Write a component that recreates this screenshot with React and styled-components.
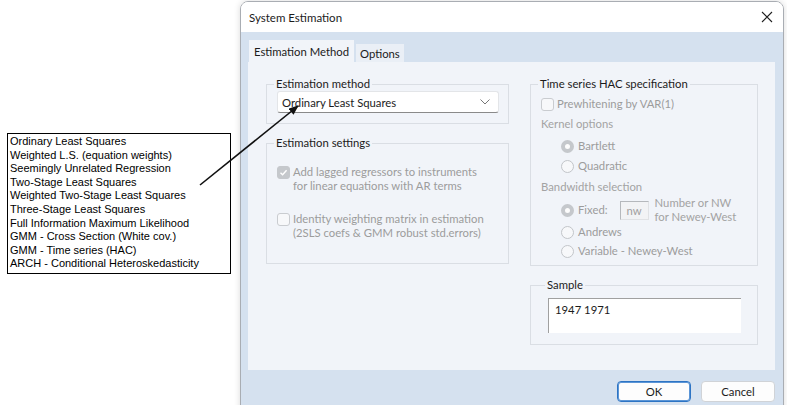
import React from 'react';
import styled, { createGlobalStyle } from 'styled-components';

const GlobalStyle = createGlobalStyle`
    html, body {
        margin: 0;
        padding: 0;
        background: #ffffff;
    }
    body {
        width: 787px;
        height: 405px;
        overflow: hidden;
        font-family: Lato, "Noto Sans", sans-serif;
    }
`;

const methods = [
    'Ordinary Least Squares',
    'Weighted L.S. (equation weights)',
    'Seemingly Unrelated Regression',
    'Two-Stage Least Squares',
    'Weighted Two-Stage Least Squares',
    'Three-Stage Least Squares',
    'Full Information Maximum Likelihood',
    'GMM - Cross Section (White cov.)',
    'GMM - Time series (HAC)',
    'ARCH - Conditional Heteroskedasticity',
];

const Check = ({ checked }) => (
    <CheckBox $checked={checked}>
        {checked && (
            <svg width="9" height="9" viewBox="0 0 9 9">
                <path d="M1.5 4.8 L3.6 6.8 L7.6 2.2" fill="none" stroke="#fff" strokeWidth="1.4" />
            </svg>
        )}
    </CheckBox>
);

const Radio = ({ selected, children }) => (
    <RadioRow>
        <RadioDot $selected={selected} />
        <span>{children}</span>
    </RadioRow>
);

const App = () => {
    return (
        <Page>
            <GlobalStyle />
            <MethodList>
                {methods.map((m) => (
                    <ListItem key={m}>{m}</ListItem>
                ))}
            </MethodList>

            <Dialog>
                <TitleBar>
                    <Title>System Estimation</Title>
                    <CloseIcon width="12" height="12" viewBox="0 0 12 12">
                        <path d="M1 1 L11 11 M11 1 L1 11" stroke="#222" strokeWidth="1.1" />
                    </CloseIcon>
                </TitleBar>

                <DialogBody>
                    <Tabs>
                        <Tab $active>Estimation Method</Tab>
                        <Tab>Options</Tab>
                    </Tabs>

                    <TabPanel>
                        <Column>
                            <Group>
                                <Legend>Estimation method</Legend>
                                <Select>
                                    <span>Ordinary Least Squares</span>
                                    <svg width="10" height="6" viewBox="0 0 10 6">
                                        <path d="M0.5 0.5 L5 5 L9.5 0.5" fill="none" stroke="#777" strokeWidth="1" />
                                    </svg>
                                </Select>
                            </Group>

                            <Group $tall>
                                <Legend>Estimation settings</Legend>
                                <CheckRow>
                                    <Check checked />
                                    <CheckText>
                                        Add lagged regressors to instruments
                                        <br />
                                        for linear equations with AR terms
                                    </CheckText>
                                </CheckRow>
                                <CheckRow $gap>
                                    <Check />
                                    <CheckText>
                                        Identity weighting matrix in estimation
                                        <br />
                                        (2SLS coefs &amp; GMM robust std.errors)
                                    </CheckText>
                                </CheckRow>
                            </Group>
                        </Column>

                        <Column>
                            <Group $hac>
                                <Legend>Time series HAC specification</Legend>
                                <CheckRow $single>
                                    <Check />
                                    <CheckText>Prewhitening by VAR(1)</CheckText>
                                </CheckRow>
                                <SubLabel>Kernel options</SubLabel>
                                <RadioList>
                                    <Radio selected>Bartlett</Radio>
                                    <Radio>Quadratic</Radio>
                                </RadioList>
                                <SubLabel>Bandwidth selection</SubLabel>
                                <RadioList $tight>
                                    <FixedRow>
                                        <Radio selected>Fixed:</Radio>
                                        <NwBox>nw</NwBox>
                                        <NwHint>
                                            Number or NW
                                            <br />
                                            for Newey-West
                                        </NwHint>
                                    </FixedRow>
                                    <Radio>Andrews</Radio>
                                    <Radio>Variable - Newey-West</Radio>
                                </RadioList>
                            </Group>

                            <Group $sample>
                                <Legend>Sample</Legend>
                                <SampleBox>1947 1971</SampleBox>
                            </Group>
                        </Column>
                    </TabPanel>

                    <Footer>
                        <Button $primary>OK</Button>
                        <Button>Cancel</Button>
                    </Footer>
                </DialogBody>
            </Dialog>

            <Arrow width="787" height="405" viewBox="0 0 787 405">
                <defs>
                    <marker id="head" markerWidth="10" markerHeight="8" refX="9" refY="4" orient="auto" markerUnits="userSpaceOnUse">
                        <path d="M0 0 L10 4 L0 8 Z" fill="#111" />
                    </marker>
                </defs>
                <line x1="200" y1="185" x2="298" y2="106" stroke="#111" strokeWidth="1.6" markerEnd="url(#head)" />
            </Arrow>
        </Page>
    );
};

export default App;

// Styled Components
const Page = styled.div`
    position: relative;
    width: 787px;
    height: 405px;
    display: flex;
    align-items: flex-start;
`;

const MethodList = styled.div`
    margin: 133px 0 0 7px;
    width: 220px;
    padding: 1px 0 2px 2px;
    border: 1px solid #000;
    background: #fff;
    font-family: Tahoma, "Liberation Sans", sans-serif;
    font-size: 11px;
    color: #000;
`;

const ListItem = styled.div`
    line-height: 13.6px;
    white-space: nowrap;
`;

const Dialog = styled.div`
    margin: 1px 0 0 9px;
    width: 542px;
    height: 412px;
    border: 1px solid #a9adb3;
    border-radius: 8px 8px 0 0;
    overflow: hidden;
    display: flex;
    flex-direction: column;
    box-shadow: 0 0 6px rgba(0, 0, 0, 0.15);
`;

const TitleBar = styled.div`
    height: 30px;
    flex-shrink: 0;
    background: #ffffff;
    display: flex;
    align-items: center;
    justify-content: space-between;
    padding: 0 8px 0 8px;
`;

const Title = styled.div`
    font-size: 11.5px;
    color: #1b1b1b;
`;

const CloseIcon = styled.svg`
    margin-right: 2px;
`;

const DialogBody = styled.div`
    flex: 1;
    background: #d5e1ef;
    padding: 8px 8px 0 7px;
    display: flex;
    flex-direction: column;
`;

const Tabs = styled.div`
    display: flex;
    align-items: flex-end;
    height: 22px;
`;

const Tab = styled.div`
    height: ${(p) => (p.$active ? '22px' : '18px')};
    padding: 0 ${(p) => (p.$active ? '5px' : '4px')};
    margin-left: ${(p) => (p.$active ? '1px' : '2px')};
    background: ${(p) => (p.$active ? '#f1f4f9' : '#eaeff6')};
    font-size: 11.3px;
    color: #1b1b1b;
    display: flex;
    align-items: center;
`;

const TabPanel = styled.div`
    height: 308px;
    box-sizing: border-box;
    background: #f1f4f9;
    padding: 15px 18px 0 18px;
    display: grid;
    grid-template-columns: 243px 228px;
    column-gap: 21px;
    align-items: start;
`;

const Column = styled.div`
    display: flex;
    flex-direction: column;
    gap: 12px;
`;

const Group = styled.fieldset`
    margin: 0;
    min-width: 0;
    border: 1px solid #dadee4;
    padding: 0 9px 10px 10px;
    height: ${(p) => (p.$tall ? '128px' : p.$hac ? '189px' : p.$sample ? '67px' : 'auto')};
    box-sizing: border-box;
    ${(p) => p.$sample && 'padding-left: 17px; padding-right: 16px;'}
`;

const Legend = styled.legend`
    padding: 0 2px;
    margin-left: -3px;
    font-size: 11.3px;
    line-height: 14px;
    color: #1b1b1b;
`;

const Select = styled.div`
    height: 22px;
    box-sizing: border-box;
    background: #fff;
    border: 1px solid #e3e5e8;
    border-bottom-color: #8a8a8a;
    border-radius: 3px;
    display: flex;
    align-items: center;
    justify-content: space-between;
    padding: 0 8px 0 4px;
    font-size: 11.3px;
    color: #1b1b1b;
`;

const CheckRow = styled.div`
    display: flex;
    align-items: flex-start;
    gap: 3px;
    margin-top: ${(p) => (p.$gap ? '19px' : p.$single ? '6px' : '15px')};
    margin-left: 0;
`;

const CheckBox = styled.div`
    width: 13px;
    height: 13px;
    box-sizing: border-box;
    flex-shrink: 0;
    margin-top: 1px;
    border-radius: 3px;
    border: 1px solid ${(p) => (p.$checked ? '#c5c8cc' : '#c9ccd0')};
    background: ${(p) => (p.$checked ? '#c5c8cc' : '#f7f8fa')};
    display: flex;
    align-items: center;
    justify-content: center;
`;

const CheckText = styled.div`
    font-size: 11.3px;
    line-height: 14px;
    color: #9c9c9c;
`;

const SubLabel = styled.div`
    font-size: 11.3px;
    line-height: 14px;
    color: #a3a3a3;
    margin-top: 6px;
`;

const RadioList = styled.div`
    display: flex;
    flex-direction: column;
    gap: ${(p) => (p.$tight ? '5px' : '6px')};
    margin: ${(p) => (p.$tight ? '6px' : '8px')} 0 7px 20px;
`;

const RadioRow = styled.div`
    display: flex;
    align-items: center;
    gap: 4px;
    font-size: 11.3px;
    line-height: 14px;
    color: #9c9c9c;
`;

const RadioDot = styled.div`
    width: 13px;
    height: 13px;
    box-sizing: border-box;
    border-radius: 50%;
    border: ${(p) => (p.$selected ? '4px solid #c5c8cc' : '1px solid #c2c5c9')};
    background: ${(p) => (p.$selected ? '#fdfdfd' : '#f7f8fa')};
`;

const FixedRow = styled.div`
    display: flex;
    align-items: center;
    height: 20px;
`;

const NwBox = styled.div`
    margin-left: 12px;
    width: 29px;
    height: 19px;
    box-sizing: border-box;
    border: 1px solid #e0e2e5;
    border-top-color: #b5b8bc;
    border-left-color: #b5b8bc;
    background: #f2f3f5;
    font-size: 11.3px;
    color: #a0a0a0;
    display: flex;
    align-items: center;
    justify-content: center;
`;

const NwHint = styled.div`
    margin-left: 6px;
    font-size: 11.3px;
    line-height: 14px;
    color: #a3a3a3;
`;

const SampleBox = styled.div`
    height: 35px;
    box-sizing: border-box;
    margin-top: 6px;
    background: #fff;
    border-left: 1px solid #a0a0a0;
    border-top: 1px solid #a0a0a0;
    padding: 4px 6px;
    font-size: 11.3px;
    color: #1b1b1b;
`;

const Footer = styled.div`
    display: flex;
    justify-content: flex-end;
    gap: 10px;
    padding: 11px 0 0 0;
`;

const Button = styled.div`
    width: 74px;
    height: 21px;
    box-sizing: border-box;
    border-radius: 4px;
    background: #fdfdfd;
    border: 1px solid ${(p) => (p.$primary ? '#2d74c4' : '#d0d3d7')};
    box-shadow: ${(p) => (p.$primary ? 'inset 0 0 0 1px #5b95d6' : 'none')};
    display: flex;
    align-items: center;
    justify-content: center;
    font-size: 11.3px;
    color: #1b1b1b;
`;

const Arrow = styled.svg`
    position: absolute;
    top: 0;
    left: 0;
    pointer-events: none;
`;
